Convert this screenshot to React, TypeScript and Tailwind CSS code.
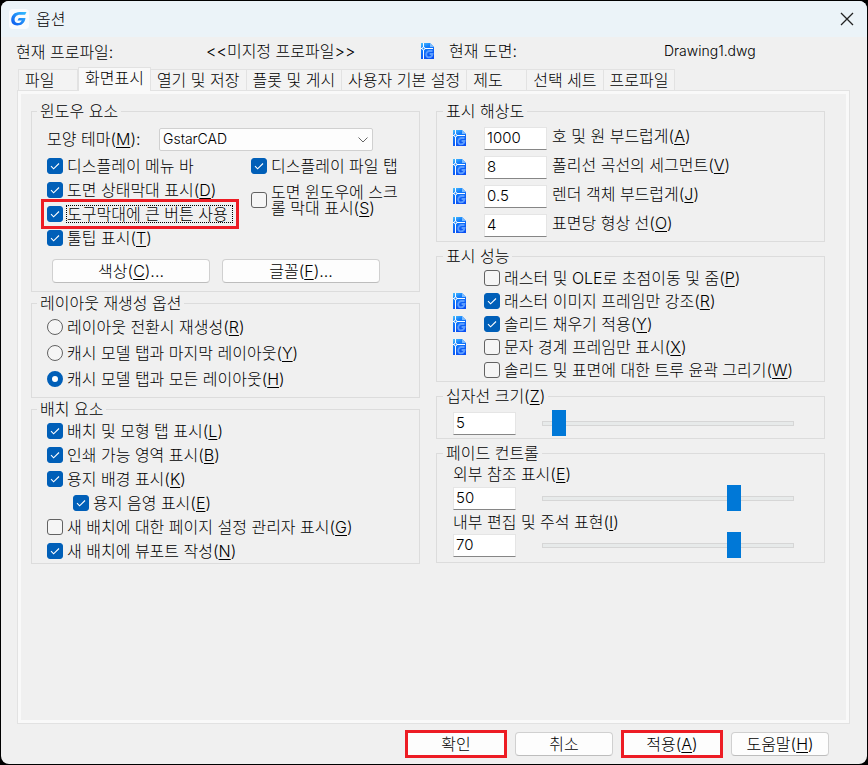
import React, { useId, useState } from 'react';

interface FieldProps {
  label: React.ReactNode;
  checked?: boolean;
}

// Underlined access key shown after a label, e.g. (M)
function Key({ k }: { k: string }) {
  return (
    <>
      (<span className="underline decoration-1 underline-offset-2">{k}</span>)
    </>
  );
}

function DrawingIcon() {
  return (
    <svg width="13" height="16" viewBox="0 0 13 16" className="shrink-0" aria-hidden="true">
      <defs>
        <linearGradient id="sheet" x1="0" y1="0" x2="0.4" y2="1">
          <stop offset="0" stopColor="#4fc3ff" />
          <stop offset="0.35" stopColor="#1480fb" />
          <stop offset="1" stopColor="#0a50f2" />
        </linearGradient>
      </defs>
      <path d="M0 0h9l4 4v12H0z" fill="url(#sheet)" />
      <path d="M9 0l4 4H9z" fill="#7dbcff" />
      <path d="M2.500 0v16M0 5.500h12" stroke="#fff" strokeWidth="1" />
      <circle cx="2.500" cy="5.500" r="1.400" fill="#1f8bff" stroke="#fff" strokeWidth="1" />
      <path
        d="M11.500 8H8.500A3.400 3.400 0 0 0 5.200 11.500c0 1.800 1.100 2.800 2.700 2.800 2 0 3.300-1.200 3.600-3.300H8.600"
        fill="none"
        stroke="#5c9dff"
        strokeWidth="1.800"
      />
    </svg>
  );
}

function AppLogo() {
  return (
    <svg width="20" height="20" viewBox="0 0 20 20" className="shrink-0" aria-hidden="true">
      <defs>
        <linearGradient id="logo" x1="1" y1="0" x2="0" y2="1">
          <stop offset="0" stopColor="#35c0ff" />
          <stop offset="1" stopColor="#0b55ee" />
        </linearGradient>
      </defs>
      <rect width="20" height="20" rx="4" fill="#fafcfe" />
      <path
        d="M17.500 3H10.500C5.500 3 2.200 6.600 2.200 10.800c0 3.600 2.400 5.700 6 5.700 4.600 0 7.700-2.700 8.300-7.500H9.800l-1.300 2.400h4.300c-.8 1.700-2.200 2.600-4 2.600-2.100 0-3.200-1.200-3.200-3.200 0-2.900 2.100-5.100 5.300-5.100h5.200z"
        fill="url(#logo)"
      />
    </svg>
  );
}

function CheckBox({ label, checked = false }: FieldProps) {
  return (
    <label className="flex w-fit items-center gap-1">
      <span className="relative h-4 w-4 shrink-0">
        <input
          type="checkbox"
          defaultChecked={checked}
          className="peer block h-4 w-4 appearance-none rounded-[3px] border border-[#626262] bg-[#f5f5f5] checked:border-[#005fb8] checked:bg-[#005fb8]"
        />
        <svg viewBox="0 0 16 16" className="pointer-events-none absolute inset-0 hidden h-4 w-4 peer-checked:block" aria-hidden="true">
          <path d="M4 8.200l2.600 2.600L12 5.500" fill="none" stroke="#fff" strokeWidth="1.100" />
        </svg>
      </span>
      {label}
    </label>
  );
}

function Radio({ label, checked = false }: FieldProps) {
  return (
    <label className="flex h-[26px] w-fit items-center gap-1">
      <input
        type="radio"
        name="regen"
        defaultChecked={checked}
        className="h-4 w-4 shrink-0 appearance-none rounded-full border border-[#626262] bg-[#f5f5f5] checked:border-[5px] checked:border-[#005fb8] checked:bg-white"
      />
      <span>{label}</span>
    </label>
  );
}

function Group({ title, className, children }: { title: React.ReactNode; className: string; children: React.ReactNode }) {
  return (
    <fieldset className={`min-w-0 border border-[#dcdcdc] ${className}`}>
      <legend className="-ml-[10px] px-[3px] leading-[17px]">{title}</legend>
      {children}
    </fieldset>
  );
}

const inputClass =
  'h-[23px] w-[63px] shrink-0 border border-[#e5e5e5] border-b-[#868686] bg-white pb-[2px] pl-[2px] font-light text-[15px] leading-5 outline-none';

function NumberRow({ value, label }: { value: string; label: React.ReactNode }) {
  const id = useId();
  return (
    <div className="flex h-6 items-center">
      <DrawingIcon />
      <input id={id} defaultValue={value} className={`ml-[18px] ${inputClass}`} />
      <label htmlFor={id} className="ml-[5px] pb-1">
        {label}
      </label>
    </div>
  );
}

function SliderRow({ text, value, min, max, name }: { text: string; value: number; min: number; max: number; name: string }) {
  const [pos, setPos] = useState(value);
  return (
    <div className="flex h-[23px] items-center">
      <input id={name} defaultValue={text} className={inputClass} />
      <input
        type="range"
        aria-label={name}
        min={min}
        max={max}
        value={pos}
        onChange={(e) => setPos(Number(e.target.value))}
        className="mr-[14px] ml-[26px] h-[5px] min-w-0 flex-1 appearance-none bg-transparent [&::-webkit-slider-runnable-track]:h-[5px] [&::-webkit-slider-runnable-track]:bg-[#e7eaea] [&::-webkit-slider-runnable-track]:shadow-[inset_0_0_0_1px_#d6d6d6] [&::-webkit-slider-thumb]:-mt-[11px] [&::-webkit-slider-thumb]:h-[26px] [&::-webkit-slider-thumb]:w-[14px] [&::-webkit-slider-thumb]:appearance-none [&::-webkit-slider-thumb]:bg-[#0078d7]"
      />
    </div>
  );
}

const tabs = ['파일', '화면표시', '열기 및 저장', '플롯 및 게시', '사용자 기본 설정', '제도', '선택 세트', '프로파일'];

const layoutOptions = [
  { text: '배치 및 모형 탭 표시', k: 'L', checked: true },
  { text: '인쇄 가능 영역 표시', k: 'B', checked: true },
  { text: '용지 배경 표시', k: 'K', checked: true },
  { text: '용지 음영 표시', k: 'E', checked: true, indent: true },
  { text: '새 배치에 대한 페이지 설정 관리자 표시', k: 'G', checked: false },
  { text: '새 배치에 뷰포트 작성', k: 'N', checked: true },
];

const performanceOptions = [
  { text: '래스터 및 OLE로 초점이동 및 줌', k: 'P', checked: false, icon: false },
  { text: '래스터 이미지 프레임만 강조', k: 'R', checked: true, icon: true },
  { text: '솔리드 채우기 적용', k: 'Y', checked: true, icon: true },
  { text: '문자 경계 프레임만 표시', k: 'X', checked: false, icon: true },
  { text: '솔리드 및 표면에 대한 트루 윤곽 그리기', k: 'W', checked: false, icon: false },
];

const buttonClass = 'rounded-[4px] border border-[#d0d0d0] border-b-[#bdbdbd] bg-[#fdfdfd]';
const marked = 'border-[3px] border-[#ed1c24] bg-[#fdfdfd]';

export default function App() {
  const [tab, setTab] = useState('화면표시');

  return (
    <div className="min-h-screen bg-black font-['Inter','Noto_Sans_CJK_KR',sans-serif] text-base leading-4 font-light whitespace-nowrap text-black">
      <div className="flex min-h-screen flex-col p-px">
        <div className="flex flex-1 flex-col overflow-hidden rounded-lg bg-[#f0f0f0]">
          <header className="flex h-9 shrink-0 items-center bg-[#ebf3f8] pr-[13px] pl-2">
            <AppLogo />
            <h1 className="ml-[7px]">옵션</h1>
            <button aria-label="닫기" className="ml-auto">
              <svg width="14" height="14" viewBox="0 0 14 14">
                <path d="M1 1l12 12M13 1L1 13" stroke="#222" strokeWidth="1.300" />
              </svg>
            </button>
          </header>

          <div className="grid h-[30px] shrink-0 grid-cols-[190px_215px_28px_215px_1fr] items-center pb-[2px] pl-[15px]">
            <span className="pt-[2px]">현재 프로파일:</span>
            <span>&lt;&lt;미지정 프로파일&gt;&gt;</span>
            <DrawingIcon />
            <span>현재 도면:</span>
            <span className="text-sm">Drawing1.dwg</span>
          </div>

          <div role="tablist" className="relative z-10 -mb-px flex h-6 shrink-0 items-end pl-[17px]">
            {tabs.map((t) => (
              <button
                key={t}
                role="tab"
                aria-selected={t === tab}
                onClick={() => setTab(t)}
                className={
                  t === tab
                    ? 'h-6 min-w-[60px] border border-b-0 border-[#e2e2e2] bg-[#f9f9f9] px-[6px] pb-1 text-left'
                    : 'h-[22px] min-w-[60px] border-y border-r border-[#e2e2e2] bg-[#f3f3f3] px-[6px] text-left first:border-l'
                }
              >
                {t}
              </button>
            ))}
          </div>

          <main className="mr-[17px] ml-4 flex flex-1 flex-col border border-[#e2e2e2]">
            <div className="flex-1 border-[3px] border-[#f9f9f9] pt-[9px] pr-[21px] pb-4 pl-[10px]">
              <div className="grid grid-cols-2 gap-4">
                <div className="flex flex-col gap-[3px]">
                  <Group title="윈도우 요소" className="px-[15px] pt-[7px] pb-2">
                    <div className="flex h-6 items-center">
                      <label htmlFor="theme" className="w-28">
                        모양 테마
                        <Key k="M" />:
                      </label>
                      <div className="relative w-[214px]">
                        <select id="theme" className="block h-[23px] w-full appearance-none rounded-[2px] border border-[#d0d0d0] bg-[#fdfdfd] pl-[3px] text-sm leading-5 font-light">
                          <option>GstarCAD</option>
                        </select>
                        <svg width="10" height="6" viewBox="0 0 10 6" className="pointer-events-none absolute top-[9px] right-[5px]">
                          <path d="M.5.500L5 5 9.500.500" fill="none" stroke="#666" />
                        </svg>
                      </div>
                    </div>

                    <div className="mt-[3px] grid grid-cols-[204px_1fr]">
                      <div>
                        <div className="flex h-6 items-center">
                          <CheckBox checked label="디스플레이 메뉴 바" />
                        </div>
                        <div className="flex h-6 items-center">
                          <CheckBox checked label={<span>도면 상태막대 표시<Key k="D" /></span>} />
                        </div>
                        <div className="relative flex h-6 w-fit items-center">
                          <CheckBox checked label={<span className="-ml-px border border-dotted border-black pr-1">도구막대에 큰 버튼 사용</span>} />
                          <span className="pointer-events-none absolute -inset-x-[6px] -inset-y-[3px] border-[3px] border-[#ed1c24]" />
                        </div>
                        <div className="flex h-6 items-center">
                          <CheckBox checked label={<span>툴팁 표시<Key k="T" /></span>} />
                        </div>
                      </div>
                      <div>
                        <div className="flex h-6 items-center">
                          <CheckBox checked label="디스플레이 파일 탭" />
                        </div>
                        <div className="flex h-11 items-center">
                          <CheckBox
                            label={
                              <span>
                                도면 윈도우에 스크
                                <br />롤 막대 표시
                                <Key k="S" />
                              </span>
                            }
                          />
                        </div>
                      </div>
                    </div>

                    <div className="mt-[9px] flex gap-3 pr-[24px] pl-[5px]">
                      <button className={`h-6 flex-1 ${buttonClass}`}>색상<Key k="C" />...</button>
                      <button className={`h-6 flex-1 ${buttonClass}`}>글꼴<Key k="F" />...</button>
                    </div>
                  </Group>

                  <Group title="레이아웃 재생성 옵션" className="px-[15px] pt-[2px] pb-[5px]">
                    <Radio label={<>레이아웃 전환시 재생성<Key k="R" /></>} />
                    <Radio label={<>캐시 모델 탭과 마지막 레이아웃<Key k="Y" /></>} />
                    <Radio checked label={<>캐시 모델 탭과 모든 레이아웃<Key k="H" /></>} />
                  </Group>

                  <Group title="배치 요소" className="px-[15px] pt-px">
                    {layoutOptions.map((o) => (
                      <div key={o.k} className={o.indent ? 'flex h-6 items-center pl-[26px]' : 'flex h-6 items-center'}>
                        <CheckBox checked={o.checked} label={<span>{o.text}<Key k={o.k} /></span>} />
                      </div>
                    ))}
                  </Group>
                </div>

                <div className="flex flex-col gap-[6px]">
                  <Group title="표시 해상도" className="px-4 pt-[6px] pb-1">
                    <div className="flex flex-col gap-[5px]">
                      <NumberRow value="1000" label={<>호 및 원 부드럽게<Key k="A" /></>} />
                      <NumberRow value="8" label={<>폴리선 곡선의 세그먼트<Key k="V" /></>} />
                      <NumberRow value="0.5" label={<>렌더 객체 부드럽게<Key k="J" /></>} />
                      <NumberRow value="4" label={<>표면당 형상 선<Key k="O" /></>} />
                    </div>
                  </Group>

                  <Group title="표시 성능" className="px-4 pt-px">
                    {performanceOptions.map((o) => (
                      <div key={o.k} className="grid h-[23px] grid-cols-[31px_1fr] items-center">
                        <span>{o.icon && <DrawingIcon />}</span>
                        <CheckBox checked={o.checked} label={<span>{o.text}<Key k={o.k} /></span>} />
                      </div>
                    ))}
                  </Group>

                  <Group title={<label htmlFor="crosshair">십자선 크기<Key k="Z" /></label>} className="px-4 pt-[7px] pb-[3px]">
                    <SliderRow name="crosshair" text="5" value={5} min={1} max={100} />
                  </Group>

                  <Group title="페이드 컨트롤" className="px-4 pb-[5px]">
                    <label htmlFor="xref" className="mb-px flex h-6 items-center">
                      <span>외부 참조 표시<Key k="E" /></span>
                    </label>
                    <SliderRow name="xref" text="50" value={70} min={0} max={90} />
                    <label htmlFor="inplace" className="flex h-6 items-center">
                      <span>내부 편집 및 주석 표현<Key k="I" /></span>
                    </label>
                    <SliderRow name="inplace" text="70" value={70} min={0} max={90} />
                  </Group>
                </div>
              </div>
            </div>
          </main>

          <footer className="flex shrink-0 items-center justify-end gap-2 py-[6px] pr-[38px]">
            <button className={`h-7 w-[102px] ${marked}`}>확인</button>
            <button className={`h-6 w-[98px] ${buttonClass}`}>취소</button>
            <button className={`h-7 w-[102px] ${marked}`}>적용<Key k="A" /></button>
            <button className={`h-6 w-[98px] ${buttonClass}`}>도움말<Key k="H" /></button>
          </footer>
        </div>
      </div>
    </div>
  );
}
